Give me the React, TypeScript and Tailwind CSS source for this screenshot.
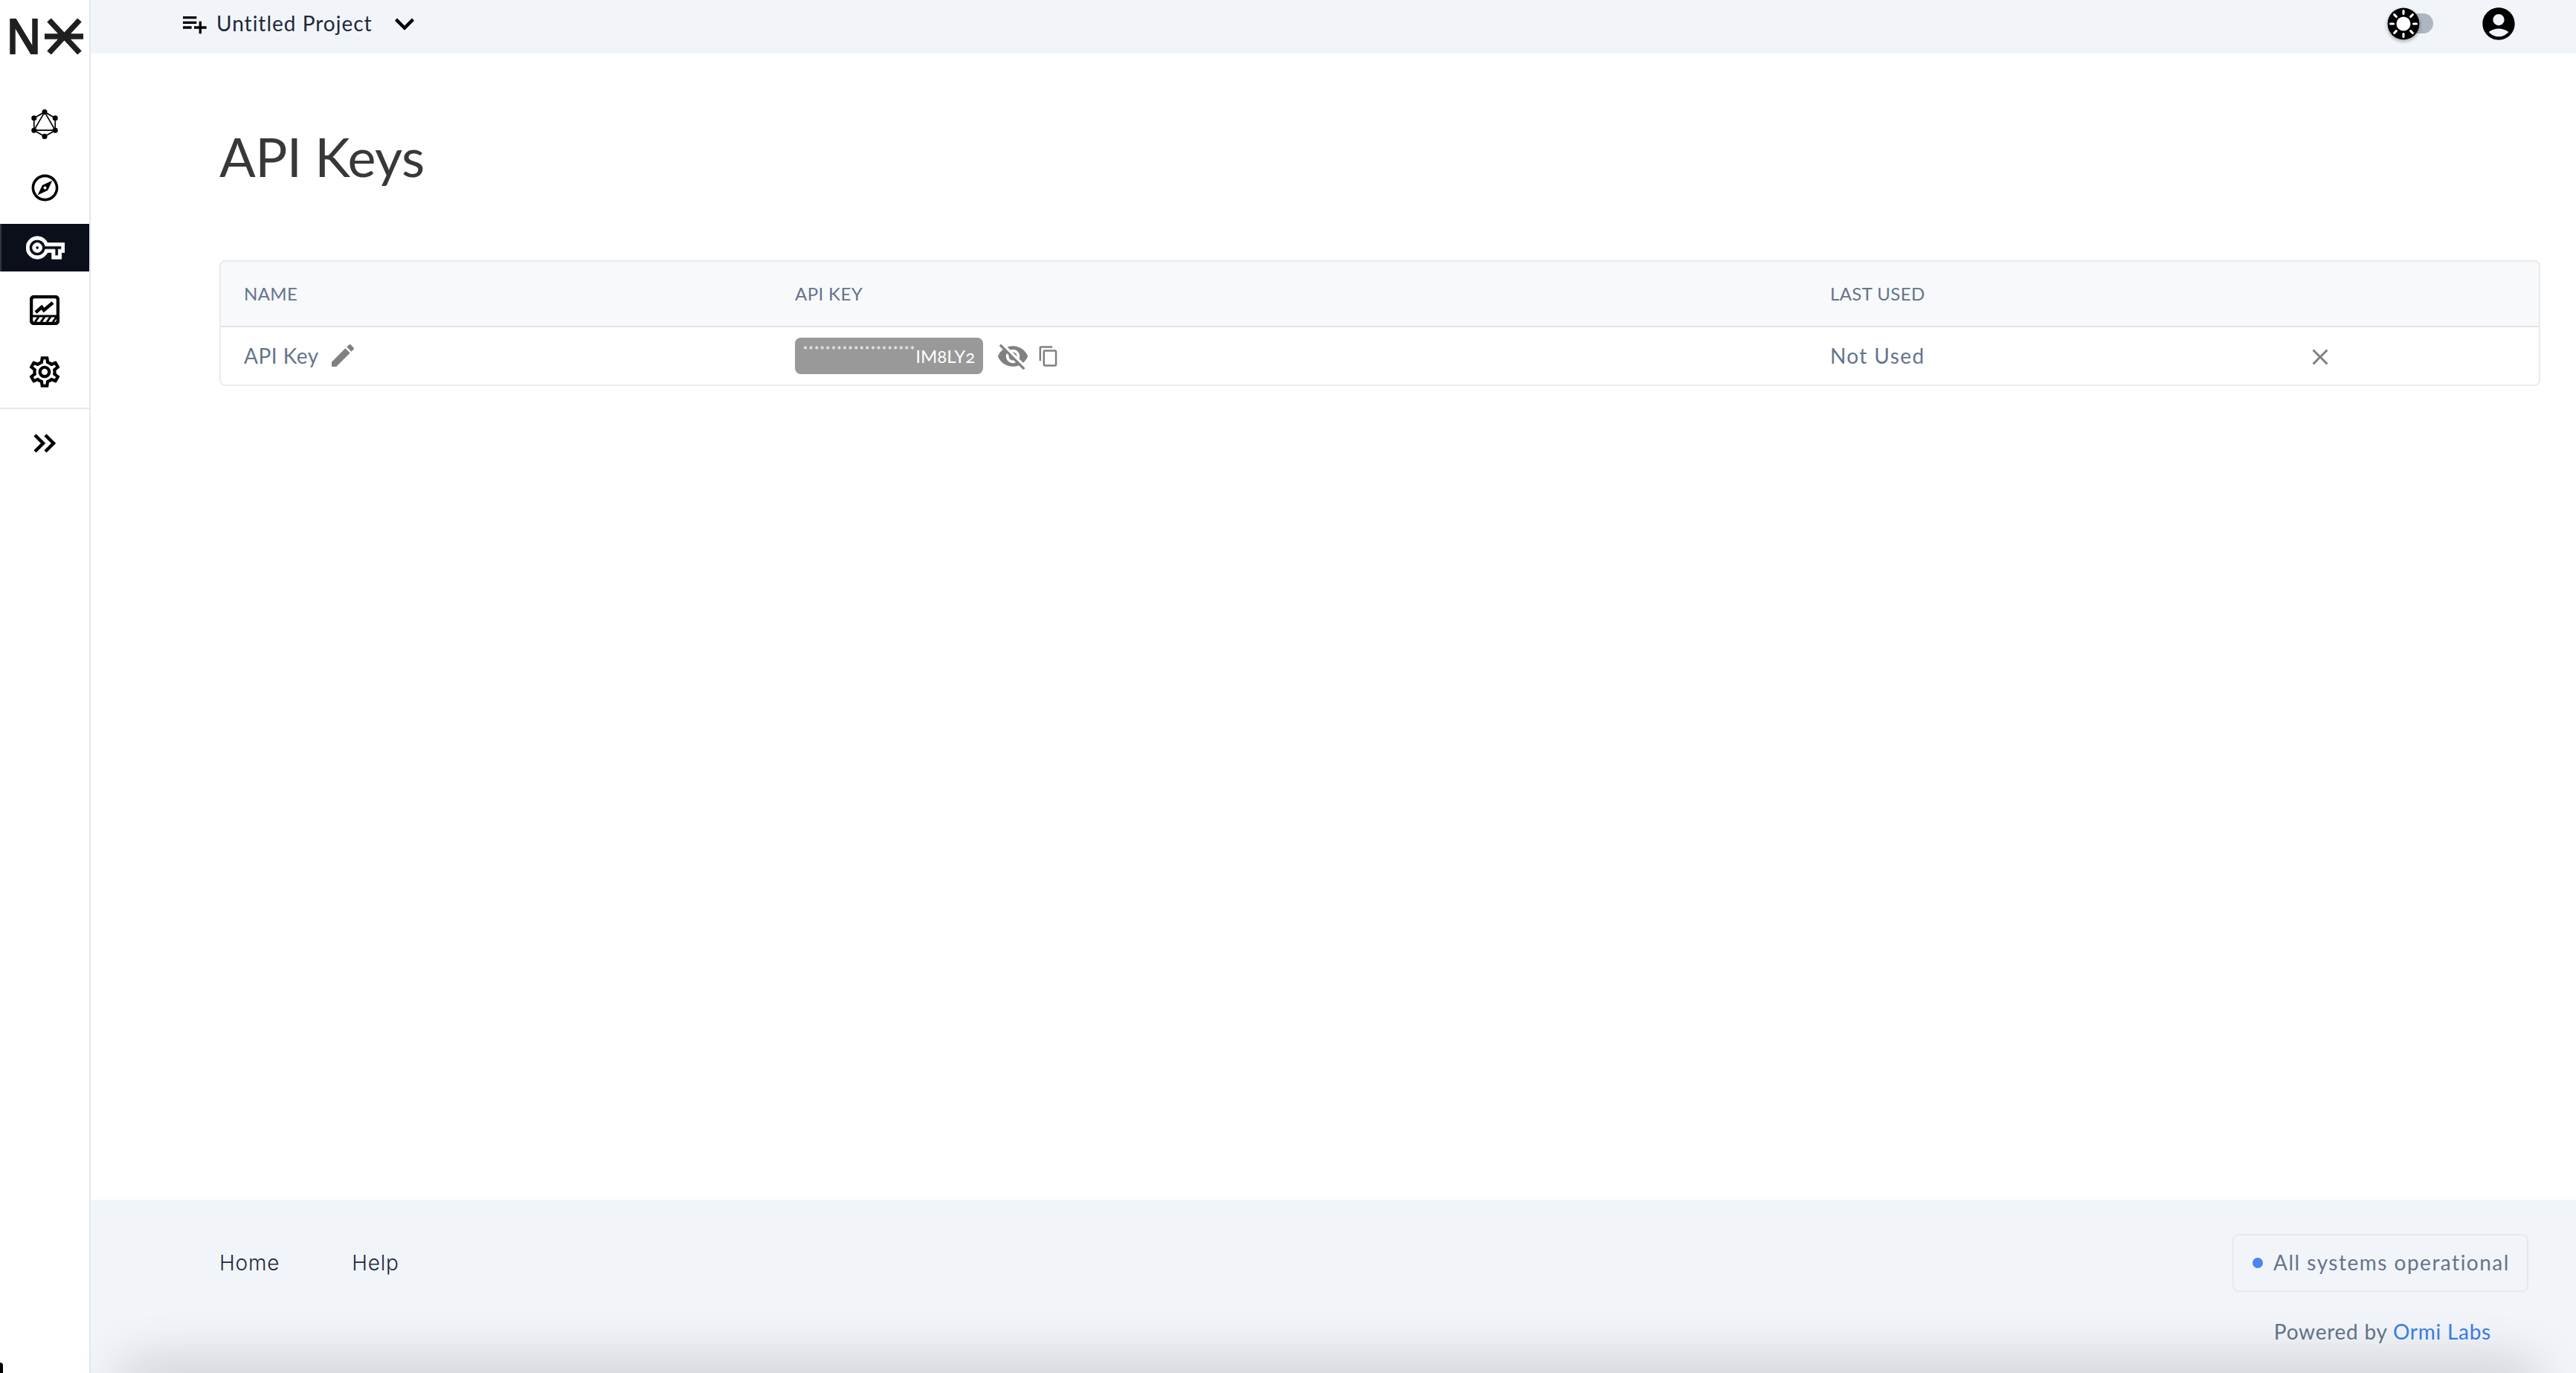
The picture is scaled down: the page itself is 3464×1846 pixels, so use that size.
import { MdAccountCircle, MdClose, MdContentCopy, MdEdit, MdKeyboardArrowDown, MdOutlineExplore, MdOutlineSettings, MdPlaylistAdd, MdVisibilityOff } from "react-icons/md";
import { SiGraphql } from "react-icons/si";

const Logo = () => (
  <svg viewBox="0 0 100 48" className="w-[100px] h-[48px]" fill="none" stroke="#1f1f1f">
    <path d="M4 48V0M34 48V0" strokeWidth="7.500" />
    <path d="M4 0l29 48" strokeWidth="8" />
    <path d="M47 24h52M53 2l41 44M94 2L53 46" strokeWidth="7.500" />
  </svg>
);

const KeyIcon = () => (
  <svg viewBox="0 0 24 24" className="w-[52px] h-[52px]" fill="#fff" stroke="#fff" strokeWidth="0.35">
    <path d="M22 19h-6v-4h-2.680c-1.140 2.420-3.600 4-6.320 4-3.860 0-7-3.140-7-7s3.140-7 7-7c2.720 0 5.170 1.580 6.320 4H24v6h-2v4zm-4-2h2v-4h2v-2H11.940l-.23-.67C11.010 8.340 9.110 7 7 7c-2.760 0-5 2.240-5 5s2.240 5 5 5c2.110 0 4.010-1.340 4.710-3.330l.23-.67H18v4zM7 15c-1.650 0-3-1.350-3-3s1.350-3 3-3 3 1.350 3 3-1.350 3-3 3zm0-4c-.55 0-1 .45-1 1s.45 1 1 1 1-.45 1-1-.45-1-1-1z" />
  </svg>
);

const ChevronsIcon = () => (
  <svg viewBox="0 0 32 26" className="w-[32px] h-[26px]" fill="none" stroke="#000" strokeWidth="4.500">
    <path d="M3 2l11 11L3 24M17 2l11 11-11 11" />
  </svg>
);

const ChartIcon = () => (
  <svg viewBox="0 0 40 40" className="w-[40px] h-[40px]" fill="none" stroke="#000">
    <rect x="2" y="2" width="36" height="36" rx="4" strokeWidth="4.500" />
    <path d="M8 23l8-7 3 4 12-10" strokeWidth="4.500" />
    <path d="M7 36l5-7M15 36l5-7M23 36l5-7M31 36l5-7M4 28h32" strokeWidth="3" />
  </svg>
);

const SunToggle = () => (
  <div className="flex items-center">
    <svg viewBox="0 0 44 44" className="relative z-10 w-[44px] h-[44px] rounded-full shadow-[0_2px_4px_rgba(0,0,0,0.3)]">
      <circle cx="22" cy="22" r="21.500" fill="#000" />
      <circle cx="22" cy="22" r="9.500" fill="#fff" />
      <g stroke="#fff" strokeWidth="3" strokeLinecap="round">
        <path d="M22 4.500v4M22 35.500v4M4.500 22h4M35.500 22h4M9.600 9.600l2.800 2.800M31.600 31.600l2.800 2.800M9.600 34.400l2.800-2.800M31.600 12.400l2.800-2.800" />
      </g>
    </svg>
    <div className="w-[42px] h-[27px] -ml-[24px] rounded-full bg-[#aeb6c1]" />
  </div>
);

export default function App() {
  return (
    <div className="relative flex h-screen overflow-hidden bg-white font-['Lato',sans-serif] text-[28px] text-[#64748b]">
      <aside className="flex w-[122px] shrink-0 flex-col border-r-2 border-[#e2e8f0] bg-white">
        <div className="mt-[25px] ml-[13px] h-[48px]"><Logo /></div>
        <nav className="mt-[62px] flex flex-col">
          <a className="flex h-16 items-center justify-center"><SiGraphql size={40} color="#000" /></a>
          <a className="mt-[21px] flex h-16 items-center justify-center"><MdOutlineExplore size={43} color="#000" /></a>
          <a className="mt-[17px] flex h-16 items-center justify-center border-l-2 border-[#2f3542] bg-[#0b0f19]"><KeyIcon /></a>
          <a className="mt-5 flex h-16 items-center justify-center"><ChartIcon /></a>
          <a className="mt-[19px] flex h-16 items-center justify-center"><MdOutlineSettings size={50} color="#000" /></a>
        </nav>
        <div className="mt-4 border-t-2 border-[#e2e8f0]" />
        <a className="mt-[14px] flex h-16 items-center justify-center"><ChevronsIcon /></a>
      </aside>

      <div className="flex min-w-0 flex-1 flex-col">
        <header className="flex h-[72px] shrink-0 items-center justify-between bg-[#f1f5f9] pb-[9px]">
          <div className="ml-[119px] flex items-center text-[#1e293b]">
            <MdPlaylistAdd size={40} color="#000" />
            <span className="ml-[10px] pb-[2px] tracking-[1px]">Untitled Project</span>
            <MdKeyboardArrowDown size={52} color="#000" className="ml-[17px]" />
          </div>
          <div className="mr-[78px] flex items-center gap-[62px]">
            <SunToggle />
            <MdAccountCircle size={52} color="#000" />
          </div>
        </header>

        <main className="flex-1 pl-[173px] pr-[48px]">
          <h1 className="mt-[94px] text-[72px] leading-[88px] font-normal tracking-[-0.6px] text-[#383838]">API Keys</h1>
          <div className="mt-[96px] overflow-hidden rounded-lg border-2 border-[#e9ebef]">
            <div className="grid h-[88px] grid-cols-[772px_1392px_1fr] items-center border-b-2 border-[#e2e4e9] bg-[#f8f9fb] text-[24px] tracking-[0.4px]">
              <span className="pl-[31px]">NAME</span>
              <span>API KEY</span>
              <span>LAST USED</span>
            </div>
            <div className="grid h-[77px] grid-cols-[772px_1392px_641px_1fr] items-center">
              <div className="flex items-center pl-[31px] pb-[2px]">
                <span className="tracking-[0.5px]">API Key</span>
                <MdEdit size={40} color="#808080" className="ml-[12px]" />
              </div>
              <div className="flex items-center">
                <span className="flex h-[49px] w-[253px] items-center justify-center rounded-lg bg-[#999999] text-[24px] text-white oldstyle-nums">
                  <span className="self-start pt-[9px] text-[15px] leading-[15px] tracking-[1.2px]">********************</span>IM8LY2
                </span>
                <MdVisibilityOff size={44} color="#808080" className="ml-[18px]" />
                <MdContentCopy size={30} color="#808080" className="ml-[11px]" />
              </div>
              <span className="pb-[2px] tracking-[1.4px]">Not Used</span>
              <MdClose size={36} color="#808080" className="mt-[2px]" />
            </div>
          </div>
        </main>

        <footer className="flex h-[233px] shrink-0 justify-between bg-[#f1f5f9] pl-[173px] pr-[64px]">
          <div className="mt-[69px] flex h-[32px] items-center gap-[97px] font-['Inter',sans-serif] font-light tracking-[0.8px] text-[#1e293b]">
            <a>Home</a>
            <a>Help</a>
          </div>
          <div className="mt-[46px] flex flex-col items-end">
            <div className="flex h-[78px] w-[398px] items-center rounded-lg border-2 border-[#e5e9ef] pl-[25px]">
              <span className="h-[14px] w-[14px] rounded-full bg-[#4a86f0]" />
              <span className="ml-[14px] pb-[2px] tracking-[1.5px]">All systems operational</span>
            </div>
            <p className="mt-[32px] mr-[50px] tracking-[0.75px]">Powered by <a className="text-[#3b7de8]">Ormi Labs</a></p>
          </div>
        </footer>
      </div>

      <div className="pointer-events-none absolute -bottom-[30px] left-[170px] right-[60px] h-[30px] rounded-full shadow-[0_0_70px_10px_rgba(0,0,0,0.2)]" />
      <div className="absolute bottom-0 left-0 h-[14px] w-[4px] rounded-tr-full bg-black" />
    </div>
  );
}
